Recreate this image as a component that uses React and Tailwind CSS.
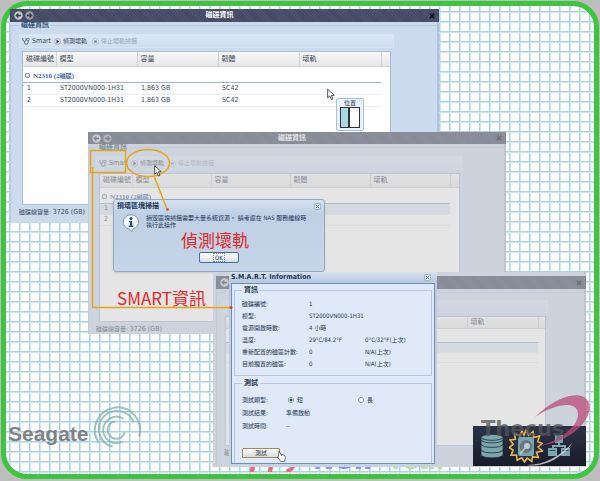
import React from "react";

const columns = ["磁碟編號", "模型", "容量", "韌體", "壞軌", ""];
const lastColumn = ["", "", "", "", "壞軌", ""];
const disks = [
  ["1", "ST2000VN000-1H31", "1,863 GB", "SC42", "", ""],
  ["2", "ST2000VN000-1H31", "1,863 GB", "SC42", "", ""],
];
const blankRow = ["", "", "", "", "", ""];

function Arrow({ className }) {
  return (
    <svg viewBox="0 0 12 18" className={className} aria-hidden="true">
      <path d="M1 1v13l3.2-3 2.3 5.6 2.4-1-2.3-5.4h4.3z" fill="#fff" stroke="#333" strokeWidth="1.3" />
    </svg>
  );
}

function NavButton({ label, back }) {
  return (
    <button aria-label={label} className="size-[9px] shrink-0">
      <svg viewBox="0 0 9 9" className="size-full">
        <circle cx="4.5" cy="4.5" r="4.2" fill={back ? "#c9c9c9" : "#9c9ca4"} />
        <path
          d={back ? "M7 4.5H2.600M4.400 2.500l-2 2 2 2" : "M2 4.500h4.400M4.600 2.500l2 2-2 2"}
          stroke="#3b3f50"
          strokeWidth="1.4"
          fill="none"
        />
      </svg>
    </button>
  );
}

function PlayIcon({ muted }) {
  return (
    <svg viewBox="0 0 8 8" className="size-[7px]" aria-hidden="true">
      <circle cx="4" cy="4" r="3.4" fill="#dfe6f4" stroke={muted ? "#a9b3c9" : "#8d97bd"} strokeWidth=".8" />
      {muted ? (
        <rect x="2.6" y="2.6" width="2.8" height="2.8" fill="#7c8cab" />
      ) : (
        <path d="M2.8 1.8 6 4 2.8 6.2z" fill="#3a3f77" />
      )}
    </svg>
  );
}

function ToolbarButtons() {
  return (
    <>
      <button className="flex items-center gap-[2px] text-[7px]">
        <svg viewBox="0 0 9 9" className="size-2" aria-hidden="true">
          <path
            d="M1 1v2.2a1.8 1.8 0 0 0 3.6 0V1M2.8 5v1.2a2 2 0 0 0 4 0V4"
            fill="none"
            stroke="#4b5c75"
            strokeWidth="1"
          />
          <circle cx="6.9" cy="2.8" r="1.3" fill="#eef3fa" stroke="#4b5c75" strokeWidth=".8" />
        </svg>
        Smart
      </button>
      <button className="flex items-center gap-[2px]">
        <PlayIcon />
        偵測壞軌
      </button>
      <button className="ml-[2px] flex items-center gap-[2px] text-[#99a5b8]">
        <PlayIcon muted />
        停止壞軌掃描
      </button>
    </>
  );
}

function DiskWindow({ place, titleBar, toolbar, table, widths, head, group, row, selected, masked, covered, footer }) {
  const heads = covered ? lastColumn : columns;
  const rows = covered ? [blankRow, blankRow] : disks;
  return (
    <section
      className={`absolute isolate flex flex-col border-r-2 border-[#b3c1d9] bg-[#ccdaed] text-[7px] leading-none text-[#3a4658] ${place}`}
    >
      <header
        className={`relative z-10 -mr-[2px] flex shrink-0 items-center gap-[2px] bg-[repeating-linear-gradient(45deg,#434963_0px,#434963_1px,#4d536c_1px,#4d536c_2px)] px-1 ${titleBar}`}
      >
        <NavButton label="上一頁" back />
        <NavButton label="下一頁" />
        <h2 className="flex-1 pr-6 text-center font-bold text-white">{covered ? "" : "磁碟資訊"}</h2>
        <button aria-label="關閉" className="size-[6px]">
          <svg viewBox="0 0 6 6" className="size-full">
            <path d="M.8.8l4.4 4.4M5.2.8.8 5.2" stroke="#0c0f18" strokeWidth="1.6" />
          </svg>
        </button>
      </header>
      <fieldset className="flex min-w-0 flex-1 flex-col border-t border-l border-[#b9c9e0] pl-1">
        <legend className="ml-1 h-[7px] px-[2px] font-bold text-[#33506f]">{covered ? "" : "磁碟資訊"}</legend>
        <div
          className={`flex shrink-0 items-center gap-[3px] border border-[#d9e4f2] bg-linear-to-b from-[#dce7f4] to-[#cfddee] pl-[2px] text-[6px] ${toolbar}`}
        >
          {!covered && <ToolbarButtons />}
        </div>
        <div className={`flex-1 border border-[#a9bfde] bg-white ${table}`}>
          <table className="w-full table-fixed border-collapse text-left">
            <colgroup>
              {widths.map((w, i) => (
                <col key={i} className={w} />
              ))}
            </colgroup>
            <thead>
              <tr className={`bg-linear-to-b from-[#f8f8f8] to-[#e6e7e9] ${head}`}>
                {heads.map((c, i) => (
                  <th
                    key={i}
                    className="border-r border-b border-[#d0d3d8] p-0 pt-px pl-[3px] font-normal whitespace-nowrap last:border-r-0"
                  >
                    {c}
                  </th>
                ))}
              </tr>
            </thead>
            <tbody>
              <tr className={group}>
                <th
                  colSpan={5}
                  className="border-b border-[#99b3d8] p-0 pt-1 pl-[2px] font-['Liberation_Serif','Noto_Sans_CJK_TC',serif] text-[#3764a0]"
                >
                  {!covered && (
                    <>
                      <span className="mr-[3px] inline-block size-[5px] rounded-[1px] border border-[#8797b5] bg-[#e2e8f2]" />
                      N2310 (2<span className="text-[6px]">磁碟</span>)
                    </>
                  )}
                </th>
                <td />
              </tr>
              {rows.map((d, r) => (
                <tr key={r} className={row}>
                  {d.map((v, i) => (
                    <td
                      key={i}
                      className={`p-0 pl-[4px] whitespace-nowrap ${i < 5 ? "border-b border-[#ededed]" : ""} ${
                        selected && r === 0 && i < 5 ? "bg-[#dfe8f6]" : ""
                      }`}
                    >
                      {v}
                    </td>
                  ))}
                </tr>
              ))}
            </tbody>
          </table>
        </div>
        <p className={`shrink-0 overflow-hidden pt-1 whitespace-nowrap ${footer}`}>
          {covered ? (
            "磁"
          ) : (
            <>
              <span className="text-[6px]">磁碟總容量:</span> 3726 (GB)
            </>
          )}
        </p>
      </fieldset>
      {masked && <div className="pointer-events-none absolute inset-y-0 left-0 -right-[2px] z-20 bg-[#cbcbcb]/50" />}
    </section>
  );
}

function CloseBox() {
  return (
    <button aria-label="關閉" className="size-[7px] rounded-[1px] border border-[#9db8dc] bg-[#f2f7fd]">
      <svg viewBox="0 0 5 5" className="size-full">
        <path d="M.7.7l3.6 3.6M4.3.7.7 4.3" stroke="#3c64a0" strokeWidth="1" />
      </svg>
    </button>
  );
}

function ScanDialog() {
  return (
    <section
      role="dialog"
      aria-label="損壞區塊掃描"
      className="absolute top-[199px] left-[113px] flex h-[73px] w-[212px] flex-col rounded-[3px] border border-[#93abc9] bg-linear-to-b from-[#d5e2f1] via-[#bfd0e5] via-20% to-[#c6d5e8] px-[3px] leading-none text-[#1d3557] shadow-sm"
    >
      <header className="flex h-[12px] items-center justify-between">
        <h3 className="text-[7px] font-bold">損壞區塊掃描</h3>
        <CloseBox />
      </header>
      <div className="flex gap-[6px] pt-[2px] pl-[5px]">
        <svg viewBox="0 0 18 18" className="size-[18px] shrink-0" aria-hidden="true">
          <path d="M9 .8a7.6 7.2 0 0 1 2.2 14.1L10 17.4 7 15A7.6 7.2 0 0 1 9 .8z" fill="#f2f7fd" stroke="#8196b4" />
          <circle cx="9" cy="4.4" r="1.5" fill="#1b4f9e" />
          <path d="M7 7h3.2v4.6h1.2v1.3H6.8v-1.3H8V8.2H7z" fill="#1b4f9e" />
        </svg>
        <p className="text-[6px] leading-[7px]">
          損毀區塊掃描需要大量系統資源。 請考慮在 NAS 服務離線時
          <br />
          執行此操作
        </p>
      </div>
      <p className="pl-[64px] font-['Noto_Sans_CJK_TC',sans-serif] text-[17px] leading-[16px] text-[#e12a2a]">
        偵測壞軌
      </p>
      <button className="mt-[4px] h-[11px] w-[40px] self-center rounded-[2px] border border-[#3e6ea8] bg-linear-to-b from-white to-[#d9dee6] text-[6px]">
        <span className="border border-dotted border-[#888] px-[1px]">OK</span>
      </button>
    </section>
  );
}

const smart = [
  ["磁碟編號:", "1", ""],
  ["模型:", "ST2000VN000-1H31", ""],
  ["電源開啟時數:", "4 小時", ""],
  ["溫度:", "29°C/84.2°F", "0°C/32°F(上次)"],
  ["重新配置的磁區計數:", "0", "N/A(上次)"],
  ["目前擱置的磁區:", "0", "N/A(上次)"],
];

function Radio({ id, label, defaultChecked }) {
  return (
    <span className="flex items-center gap-[3px]">
      <input
        type="radio"
        name="kind"
        id={id}
        defaultChecked={defaultChecked}
        className="m-0 size-[6px] appearance-none rounded-full border border-[#8a97a5] bg-white checked:bg-[radial-gradient(circle,#2c6c72_50%,#fff_60%)]"
      />
      <label htmlFor={id}>{label}</label>
    </span>
  );
}

function SmartDialog() {
  return (
    <section
      role="dialog"
      aria-label="S.M.A.R.T. Information"
      className="absolute top-[272px] left-[229px] flex h-[195px] w-[208px] flex-col rounded-[2px] bg-linear-to-b from-[#d6e1ee] via-[#b9cbe0] via-5% to-[#c3d3e8] px-[2px] pb-[3px] text-[6px] leading-none text-[#26384f]"
    >
      <header className="flex h-[11px] shrink-0 items-center justify-between pr-1">
        <h3 className="text-[7px] font-bold">S.M.A.R.T. Information</h3>
        <CloseBox />
      </header>
      <div className="flex flex-1 flex-col border border-[#6f8fb5] bg-[#dfe9f8] px-[2px] pt-[3px]">
        <fieldset className="h-[89px] border border-[#b5c7e2] pl-[7px]">
          <legend className="px-[2px] text-[7px] font-bold">資訊</legend>
          <table className="mt-[4px] w-full table-fixed text-left">
            <tbody>
              {smart.map(([k, v, last]) => (
                <tr key={k} className="h-[12px] whitespace-nowrap">
                  <th className="w-[67px] p-0 font-normal">{k}</th>
                  <td className="w-[56px] p-0">{v}</td>
                  <td className="p-0">{last}</td>
                </tr>
              ))}
            </tbody>
          </table>
        </fieldset>
        <fieldset className="mt-1 flex-1 border border-b-0 border-[#b5c7e2] pl-[7px]">
          <legend className="px-[2px] text-[7px] font-bold">測試</legend>
          <div className="grid grid-cols-[44px_1fr] pt-[6px] leading-[13px]">
            <span>測試類型:</span>
            <div className="grid grid-cols-[70px_1fr] pl-[2px]">
              <Radio id="short" label="短" defaultChecked />
              <Radio id="long" label="長" />
            </div>
            <span>測試結果:</span>
            <span>準備啟動</span>
            <span>測試時間:</span>
            <span>--</span>
          </div>
          <button className="mt-[16px] block h-[10px] w-[38px] rounded-[1px] border border-[#a88d4a] bg-linear-to-b from-[#fdfdfd] to-[#d6dae2] text-[6px]">
            測試
          </button>
        </fieldset>
      </div>
    </section>
  );
}

function Dock() {
  return (
    <nav className="absolute top-[426px] left-[473px] flex h-[40px] w-[113px] items-center justify-between bg-linear-to-b from-[#2d3347] to-[#181c2a] px-2">
      <button aria-label="儲存">
        <svg viewBox="0 0 22 24" className="h-6 w-[22px]">
          <g fill="#7ba6ae" stroke="#222839" strokeWidth=".8">
            <path d="M0 16.5v4C0 25 22 25 22 20.5v-4z" />
            <path d="M0 11v4.500C0 20 22 20 22 15.500V11z" />
            <path d="M0 6v4c0 4.500 22 4.500 22 0V6z" />
            <path d="M0 3v2.500C0 10 22 10 22 5.500V3z" />
            <ellipse cx="11" cy="3.300" rx="11" ry="3" />
          </g>
        </svg>
      </button>
      <button aria-label="磁碟">
        <svg viewBox="0 0 34 34" className="size-[34px]">
          <path
            d="M17 1l2.500 5.500L24 2.500l.8 6L30.500 7l-1.800 5.700 4.600 1.600-4.200 3.700 4.200 4-5.800 1.200 1.800 5.300-5.800-.8-.7 4.800-4.500-3.400L15.500 33l-2.700-4.200-4.600 2.500-.8-5.300-5.300.2 2-5.200L0 18.500l4.200-3.200L1 11l5.400-.6-.8-5.700 5.300 2L13 1.800l2 4.400z"
            fill="#26303f"
            stroke="#e8b650"
            strokeWidth="1.6"
          />
          <rect x="9" y="8" width="16" height="19" rx="2" fill="#7ba6ae" />
          <circle cx="17" cy="17.500" r="6.500" fill="#69777e" />
          <circle cx="18" cy="17" r="3" fill="#b9ccd0" />
          <path d="M11 25l6-7" stroke="#b9ccd0" strokeWidth="1.500" />
        </svg>
      </button>
      <button aria-label="網路" className="mr-2">
        <svg viewBox="0 0 22 22" className="size-[22px]">
          <g fill="#7ba6ae">
            <rect x="7" width="8" height="8" />
            <rect y="13" width="9" height="8" />
            <rect x="13" y="13" width="9" height="8" />
            <path d="M10 8h2v2h6v3h-2v-1H6v1H4v-3h6z" />
          </g>
          <path d="M8.500 2h5M8.500 4h5M1.500 15.500h6M14.500 15.500h6" stroke="#36505e" />
        </svg>
      </button>
    </nav>
  );
}

export default function App() {
  return (
    <main className="relative h-screen w-full overflow-hidden bg-[#bdbdbd] px-[1px] pt-[1px] pb-[2px] font-['DejaVu_Sans_Condensed','Noto_Sans_CJK_TC',sans-serif]">
      <div className="h-full w-full rounded-[26px] border-[5px] border-[#3fc440] bg-white bg-[linear-gradient(#abd3e3_1px,#cfe6f0_1px,#cfe6f0_2px,transparent_2px),linear-gradient(90deg,#abd3e3_1px,#cfe6f0_1px,#cfe6f0_2px,transparent_2px)] bg-size-[10px_10px] bg-position-[3px_5px] bg-origin-padding" />

      <p className="absolute top-[443px] left-[212px] flex items-start gap-3 text-[28px] leading-[34px] font-bold italic">
        <span className="-mt-[3px] text-[#e86a80]">Happy</span>
        <span className="text-[#8f95d6]">New</span>
        <span className="text-[#bfe08a]">Year</span>
      </p>

      <div className="absolute top-[405px] left-[8px] flex items-center gap-[4px]">
        <span className="pt-[8px] font-['Liberation_Sans',sans-serif] text-[21px] leading-6 font-bold text-[#7f8385]">
          Seagate
        </span>
        <svg viewBox="0 0 50 50" className="size-[49px]" aria-hidden="true">
          <g fill="none" stroke="#7faeac" strokeOpacity=".75" strokeWidth="2">
            <path d="M6 38.500A23 23 0 1 1 47 32" />
            <path d="M20 42.500A18.500 18.500 0 1 1 41.500 17.500" />
            <path d="M30 37.500A13.500 13.500 0 1 1 31 14" />
            <path d="M32.500 28A9 9 0 1 1 23 16.500" />
          </g>
        </svg>
      </div>

      <DiskWindow
        place="top-[9px] left-[10px] h-[214px] w-[429px]"
        titleBar="h-[13px]"
        toolbar="ml-1 mt-[5px] mr-[43px] h-[14px]"
        table="ml-[7px] mt-[3px] mr-[46px]"
        widths={["w-[33px]", "w-[81px]", "w-[81px]", "w-[81px]", "w-[82px]", ""]}
        head="h-[14px]"
        group="h-[16px]"
        row="h-[12px]"
        footer="ml-1 h-[18px]"
      />

      <div className="absolute top-[98px] left-[336px] flex h-[33px] w-[28px] flex-col items-center rounded-[2px] border border-[#a9c0dc] bg-[#e9f1fa] text-[6px] leading-[8px] text-[#333]">
        <span>位置</span>
        <div className="grid h-[21px] w-[20px] grid-cols-2 divide-x-2 divide-[#333] border border-[#333] bg-white">
          <span className="bg-[#a9d8e4]" />
          <span />
        </div>
      </div>
      <Arrow className="absolute top-[88px] left-[327px] h-[13px] w-2" />

      <DiskWindow
        place="top-[132px] left-[88px] h-[202px] w-[418px]"
        titleBar="h-[12px]"
        toolbar="ml-[3px] mt-[5px] mr-[41px] h-[14px]"
        table="ml-[6px] mt-[3px] mr-[44px]"
        widths={["w-[32px]", "w-[79px]", "w-[79px]", "w-[80px]", "w-[80px]", ""]}
        head="h-[13px]"
        group="h-[16px]"
        row="h-[11px]"
        footer="ml-[3px] h-[12px]"
        selected
        masked
      />

      <ScanDialog />

      <DiskWindow
        place="top-[272px] left-[213px] h-[195px] w-[373px] pt-1 pl-[3px]"
        titleBar="h-[13px]"
        toolbar="ml-[2px] mt-[4px] mr-[36px] h-[13px]"
        table="ml-[4px] mt-[3px] mr-[38px]"
        widths={["w-[28px]", "w-[71px]", "w-[71px]", "w-[71px]", "w-[71px]", ""]}
        head="h-[11px]"
        group="h-[14px]"
        row="h-[10px]"
        footer="ml-[3px] h-[21px]"
        selected
        masked
        covered
      />

      <SmartDialog />
      <Dock />

      <p className="absolute top-[419px] left-[481px] font-['DejaVu_Sans',sans-serif] text-[21px] leading-[20px] font-bold text-[#55555a]/75">
        Thecus<sup className="text-[6px]">®</sup>
      </p>
      <svg viewBox="0 0 70 84" className="absolute top-[388px] left-[526px] h-[84px] w-[70px]" aria-hidden="true">
        <path
          d="M9 29C28 10 56-1 63 15c5 16-19 40-51 43 24-5 45-24 39-36C47 13 27 17 9 29z"
          fill="#bd4a78"
          fillOpacity=".75"
        />
        <path d="M47 54C36 72 14 80 1 77c17 0 34-9 46-23z" fill="#d9d9df" fillOpacity=".8" />
      </svg>

      <p className="absolute top-[287px] left-[117px] font-['Noto_Sans_CJK_TC',sans-serif] text-[17px] leading-[22px] text-[#e12a2a]">
        SMART資訊
      </p>

      <svg viewBox="0 0 600 481" className="pointer-events-none absolute top-0 left-0 h-[481px] w-[600px]" aria-hidden="true">
        <g fill="none" stroke="#e6a51f" strokeWidth="1.500">
          <rect x="90.500" y="150.500" width="35" height="22" />
          <ellipse cx="148" cy="163" rx="21.500" ry="13.500" />
          <path d="M154 176l13 33" />
          <path d="M92.500 167V307.500H231" />
        </g>
        <circle cx="167.500" cy="209.500" r="1.300" fill="#d4481c" />
        <circle cx="231" cy="307.500" r="1.500" fill="#d4481c" />
        <path d="M279 451l2.500 4.500v-1l3 .8 1 2-1 4h-4l-3-4.500 1-.5z" fill="#fff" stroke="#333" strokeWidth=".7" />
      </svg>
      <Arrow className="absolute top-[165px] left-[154px] h-[12px] w-2" />
    </main>
  );
}
